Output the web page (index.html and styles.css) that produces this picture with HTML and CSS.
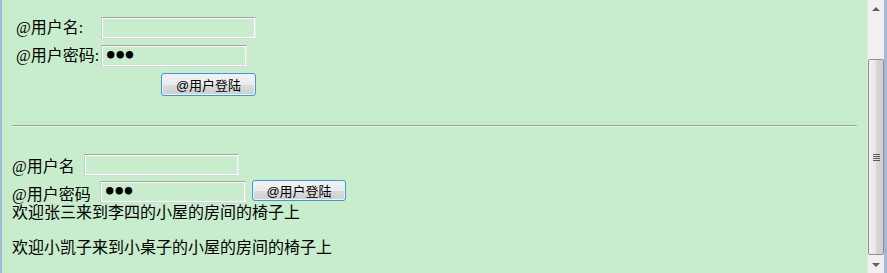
FILE: index.html
```html
<!DOCTYPE html>
<html lang="zh-CN">
<head>
    <meta charset="UTF-8">
    <title>用户登陆</title>
    <link rel="stylesheet" href="styles.css">
</head>
<body>
    <div class="window">
        <div class="page">
            <div class="login-table">
                <span class="label">@用户名:</span>
                <input class="box box-name" type="text">
                <span class="label">@用户密码:</span>
                <input class="box box-pass" type="password" value="abc">
                <span></span>
                <button class="btn" type="button">@用户登陆</button>
            </div>

            <hr class="rule">

            <div class="login-inline">
                <div class="row">
                    <span class="label lbl-name">@用户名</span>
                    <input class="box box-name" type="text">
                </div>
                <div class="row">
                    <span class="label lbl-pass">@用户密码</span>
                    <input class="box box-pass" type="password" value="abc">
                    <button class="btn btn-inline" type="button">@用户登陆</button>
                </div>
            </div>
            <div class="welcome">欢迎张三来到李四的小屋的房间的椅子上</div>
            <div class="welcome second">欢迎小凯子来到小桌子的小屋的房间的椅子上</div>
        </div>

        <div class="scrollbar">
            <div class="arrow up"></div>
            <div class="track">
                <div class="thumb"><span class="grip"></span></div>
            </div>
            <div class="arrow down"></div>
        </div>
        <div class="edge"></div>
    </div>
</body>
</html>
```

FILE: styles.css
```css
body {
    margin: 0;
    font-family: "Liberation Serif", "Noto Sans CJK SC", serif;
    font-size: 16px;
    color: #000;
}
.window {
    display: flex;
    height: 273px;
    border-left: 2px solid #a3b9d8;
    box-sizing: border-box;
}
.page {
    flex: 1;
    background-color: #c7edcc;
    padding: 17px 10px 0 10px;
    overflow: hidden;
}

/* first form, laid out like a table */
.login-table {
    display: grid;
    grid-template-columns: 85px 155px;
    row-gap: 6px;
    align-items: center;
    margin-left: 4px;
}
.label {
    line-height: 18px;
    white-space: nowrap;
}
.box {
    height: 22px;
    box-sizing: border-box;
    margin: 0;
    padding: 0 2px;
    background: transparent;
    border: 1px solid #fff;
    border-top-color: #a4a4a4;
    border-left-color: #c9c9c9;
    border-bottom-color: #d6d6d6;
    border-right-color: #e6e6e6;
    box-shadow: inset 0 0 0 1px #fff;
    font-size: 13px;
    font-family: "DejaVu Sans", sans-serif;
}
.box[type="password"] {
    font-size: 21px;
    font-weight: bold;
    letter-spacing: -4px;
    color: #000;
}
.box-name { width: 155px; }
.box-pass { width: 146px; }
.btn {
    justify-self: end;
    width: 95px;
    height: 23px;
    margin: 0;
    padding: 0;
    border: 1px solid #3c9ad8;
    border-radius: 3px;
    background: linear-gradient(#f3f3f3 0%, #ebebeb 50%, #dcdcdc 51%, #cfcfcf 100%);
    box-shadow: inset 0 0 0 1px #e8f4fb;
    font-family: "Liberation Sans", "Noto Sans CJK SC", sans-serif;
    font-size: 13px;
    color: #000;
}

.rule {
    height: 0;
    margin: 29px 0 0 0;
    border: 0;
    border-top: 1px solid #a0a0a0;
    border-bottom: 1px solid #e4f5e6;
}

/* second form, inline */
.login-inline {
    margin-top: 27px;
}
.row {
    display: flex;
    align-items: center;
}
.row + .row {
    margin-top: 4px;
}
.lbl-name { width: 72px; padding-top: 4px; }
.lbl-pass { width: 88px; padding-top: 6px; }
.btn-inline {
    margin-left: 6px;
    margin-top: -4px;
    width: 94px;
    height: 21px;
}
.welcome {
    line-height: 18px;
    white-space: nowrap;
}
.second {
    margin-top: 17px;
}

/* fake window scrollbar */
.scrollbar {
    width: 17px;
    display: flex;
    flex-direction: column;
    background: #f0f0f0;
    border-left: 1px solid #e6e6e6;
    box-sizing: border-box;
}
.arrow {
    height: 17px;
    display: flex;
    align-items: center;
    justify-content: center;
}
.arrow::before {
    content: "";
    border-left: 4px solid transparent;
    border-right: 4px solid transparent;
}
.up::before { border-bottom: 4px solid #606060; }
.down::before { border-top: 4px solid #606060; }
.track {
    flex: 1;
    padding: 42px 0 1px 0;
    display: flex;
}
.thumb {
    flex: 1;
    border: 1px solid #8e8f8f;
    border-radius: 2px;
    background: linear-gradient(90deg, #f2f2f2 0%, #e8e8e8 45%, #d6d6d6 55%, #cfcfcf 100%);
    display: flex;
    align-items: center;
    justify-content: center;
}
.grip {
    width: 7px;
    height: 7px;
    background: repeating-linear-gradient(#5c5c5c 0 1px, transparent 1px 2px);
}
.edge {
    width: 3px;
    background: #a3b9d8;
}
```
